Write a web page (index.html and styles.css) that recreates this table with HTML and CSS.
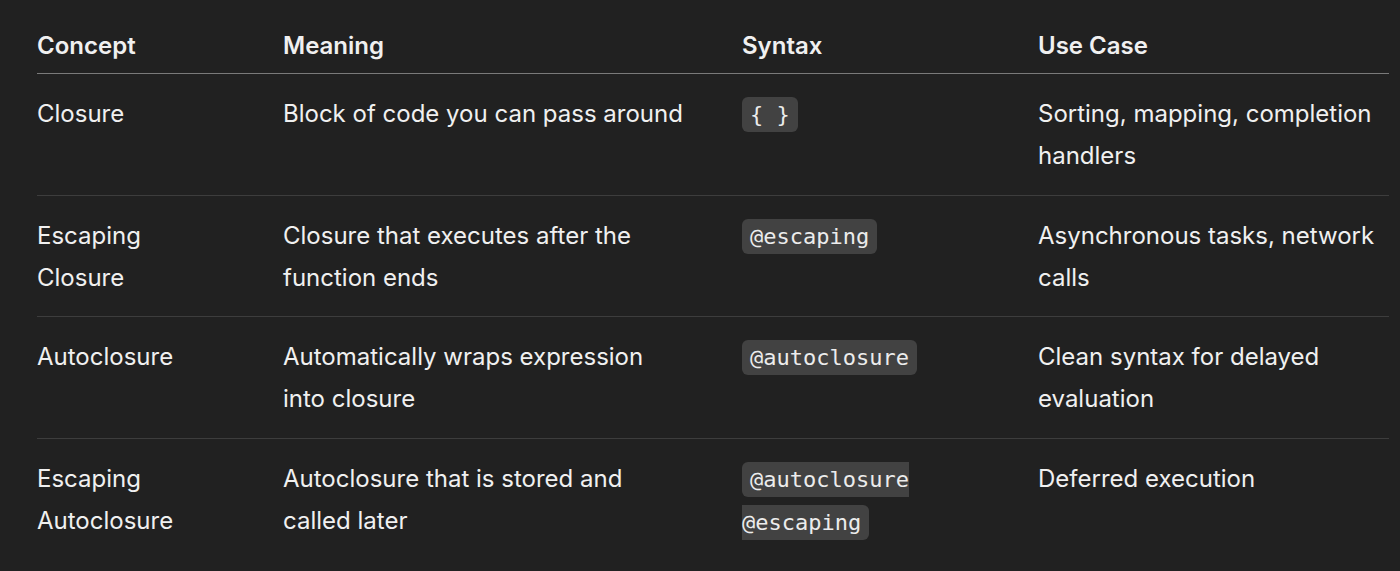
FILE: index.html
```html
<!DOCTYPE html>
<html lang="en">
<head>
<meta charset="utf-8">
<title>Closures</title>
<link rel="stylesheet" href="styles.css">
</head>
<body>
<div class="wrap">
  <table class="tbl">
    <colgroup>
      <col class="c1"><col class="c2"><col class="c3"><col class="c4">
    </colgroup>
    <thead>
      <tr><th>Concept</th><th>Meaning</th><th>Syntax</th><th>Use Case</th></tr>
    </thead>
    <tbody>
      <tr>
        <td>Closure</td>
        <td>Block of code you can pass around</td>
        <td><code>{ }</code></td>
        <td>Sorting, mapping, completion handlers</td>
      </tr>
      <tr>
        <td>Escaping Closure</td>
        <td>Closure that executes after the function ends</td>
        <td><code>@escaping</code></td>
        <td>Asynchronous tasks, network calls</td>
      </tr>
      <tr>
        <td>Autoclosure</td>
        <td>Automatically wraps expression into closure</td>
        <td><code>@autoclosure</code></td>
        <td>Clean syntax for delayed evaluation</td>
      </tr>
      <tr>
        <td>Escaping Autoclosure</td>
        <td>Autoclosure that is stored and called later</td>
        <td><code>@autoclosure @escaping</code></td>
        <td>Deferred execution</td>
      </tr>
    </tbody>
  </table>
</div>
</body>
</html>
```

FILE: styles.css
```css
html, body {
  margin: 0;
  padding: 0;
  background: #212121;
}
body {
  color: #f0f0f0;
  font-family: Inter, "Noto Sans", sans-serif;
  font-size: 24px;
  line-height: 42px;
  overflow: hidden;
}
.wrap {
  padding: 25px 11px 0 37px;
}
.tbl {
  width: 1352px;
  border-collapse: collapse;
  table-layout: fixed;
}
.c1 { width: 246px; }
.c2 { width: 459px; }
.c3 { width: 296px; }
.c4 { width: 351px; }
.tbl th {
  text-align: left;
  font-weight: 600;
  padding: 0 56px 6px 0;
  border-bottom: 1px solid #7a7a7a;
  vertical-align: top;
}
.tbl td {
  padding: 19px 56px 17.67px 0;
  vertical-align: top;
  border-bottom: 1px solid #3d3d3d;
}
.tbl th:last-child,
.tbl td:last-child {
  padding-right: 0;
}
.tbl tbody tr:last-child td {
  border-bottom: none;
}
.tbl code {
  font-family: "DejaVu Sans Mono", "Liberation Mono", monospace;
  font-size: 22px;
  background: #424242;
  border-radius: 6px;
  padding: 5px 8px;
  color: #ececec;
}
```
